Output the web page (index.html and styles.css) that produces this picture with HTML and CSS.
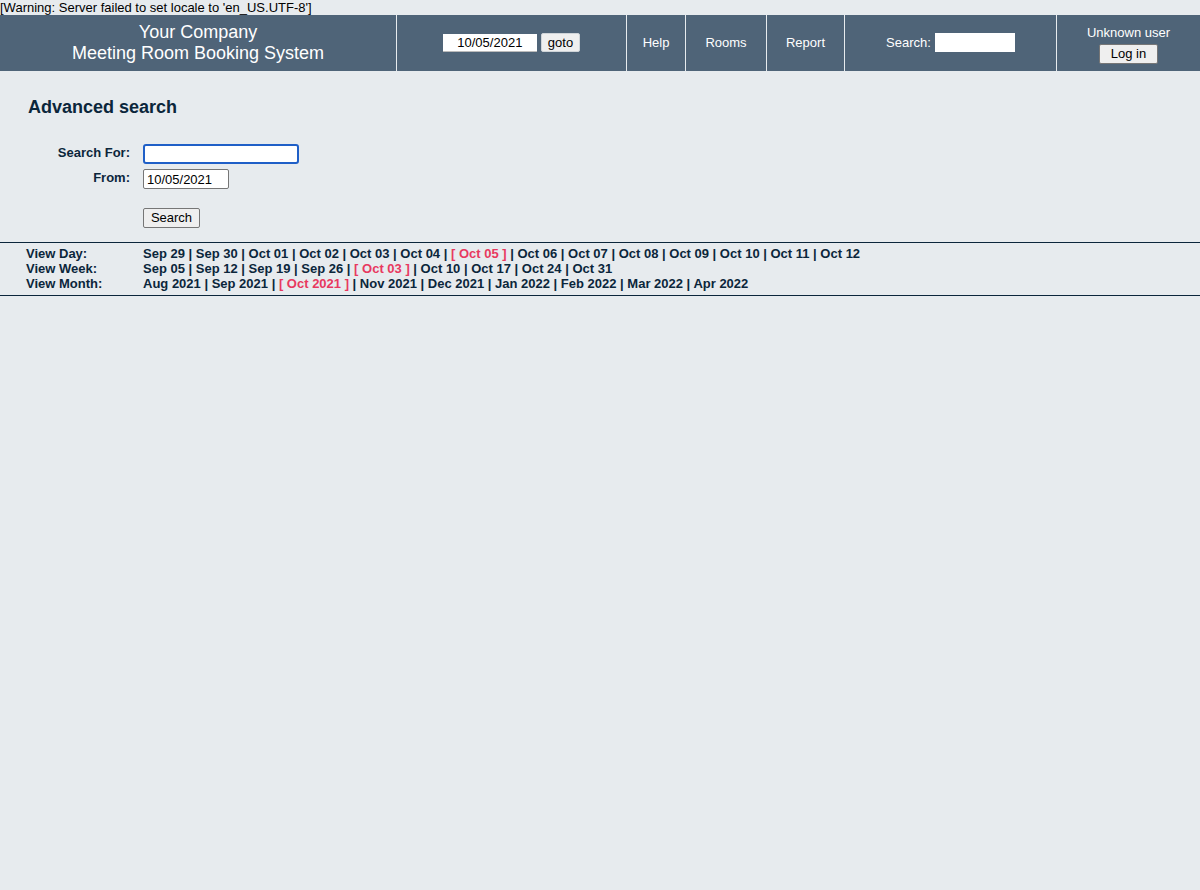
FILE: index.html
```html
<!DOCTYPE html>
<html>
<head>
<meta charset="utf-8">
<title>Advanced search</title>
<link rel="stylesheet" href="styles.css">
</head>
<body>
<div class="warning">[Warning: Server failed to set locale to 'en_US.UTF-8']</div>
<header class="banner">
  <div class="cell company">Your Company<br>Meeting Room Booking System</div>
  <div class="cell dategoto"><input class="datein" type="text" value="10/05/2021"><button class="btn">goto</button></div>
  <div class="cell nav help">Help</div>
  <div class="cell nav rooms">Rooms</div>
  <div class="cell nav report">Report</div>
  <div class="cell searchcell"><span>Search:</span><input class="searchin" type="text"></div>
  <div class="cell usercell"><div>Unknown user</div><button class="btn login">Log in</button></div>
</header>
<main class="content">
  <h2 class="title">Advanced search</h2>
  <form class="sform">
    <label class="lbl">Search For:</label>
    <input class="textin focus" type="text">
    <label class="lbl">From:</label>
    <input class="textin from" type="text" value="10/05/2021">
    <span></span>
    <button class="btn submit" type="button">Search</button>
  </form>
</main>
<nav class="viewnav">
  <div class="vrow"><span class="vlbl">View Day:</span><span class="vlinks">Sep 29 | Sep 30 | Oct 01 | Oct 02 | Oct 03 | Oct 04 | <span class="cur">[ Oct 05 ]</span> | Oct 06 | Oct 07 | Oct 08 | Oct 09 | Oct 10 | Oct 11 | Oct 12</span></div>
  <div class="vrow"><span class="vlbl">View Week:</span><span class="vlinks">Sep 05 | Sep 12 | Sep 19 | Sep 26 | <span class="cur">[ Oct 03 ]</span> | Oct 10 | Oct 17 | Oct 24 | Oct 31</span></div>
  <div class="vrow"><span class="vlbl">View Month:</span><span class="vlinks">Aug 2021 | Sep 2021 | <span class="cur">[ Oct 2021 ]</span> | Nov 2021 | Dec 2021 | Jan 2022 | Feb 2022 | Mar 2022 | Apr 2022</span></div>
</nav>
</body>
</html>
```
FILE: styles.css
```css
html, body {
  margin: 0;
  padding: 0;
  background: #e7ebee;
  font-family: "Liberation Sans", Arial, sans-serif;
  color: #0b263b;
}
.warning {
  font-size: 13px;
  line-height: 15px;
  height: 15px;
  color: #000;
}
.banner {
  display: flex;
  gap: 1px;
  height: 56px;
  color: #fff;
}
.cell {
  background: #4f6478;
  display: flex;
  align-items: center;
  justify-content: center;
  font-size: 13px;
}
.company {
  width: 396px;
  font-size: 18px;
  line-height: 21px;
  text-align: center;
}
.nav { padding-bottom: 2px; box-sizing: border-box; }
.dategoto { width: 229px; gap: 4px; padding-bottom: 1px; box-sizing: border-box; }
.help { width: 58px; }
.rooms { width: 80px; }
.report { width: 77px; }
.searchcell { width: 211px; gap: 4px; padding-bottom: 2px; box-sizing: border-box; }
.usercell { flex: 1; flex-direction: column; gap: 4px; padding-top: 2px; box-sizing: border-box; }
input {
  font-family: "Liberation Sans", Arial, sans-serif;
  font-size: 13px;
  box-sizing: border-box;
  background: #fff;
  color: #000;
}
.datein {
  width: 94px;
  height: 18px;
  border: none;
  border-bottom: 1px solid #bbb;
  text-align: center;
  padding: 0 2px;
}
.searchin {
  width: 80px;
  height: 19px;
  border: none;
  padding: 0 2px;
}
.btn {
  font-family: "Liberation Sans", Arial, sans-serif;
  font-size: 13px;
  background: #efefef;
  border: 1px solid #767676;
  border-radius: 2px;
  color: #000;
  padding: 1px 6px;
  height: 20px;
  line-height: 16px;
  box-sizing: border-box;
}
.dategoto .btn { border-color: #cfd4d8; height: 19px; }
.login { width: 59px; }
.content {
  padding: 0 0 0 28px;
}
.title {
  margin: 0;
  padding-top: 26px;
  font-size: 18px;
  line-height: 20px;
  font-weight: bold;
}
.sform {
  display: grid;
  grid-template-columns: 102px auto;
  justify-content: start;
  column-gap: 13px;
  margin-top: 27px;
  padding-bottom: 14px;
}
.lbl {
  font-size: 13px;
  font-weight: bold;
  text-align: right;
  line-height: 15px;
  padding-top: 1px;
}
.textin {
  height: 20px;
  border: 1px solid #767676;
  border-radius: 2px;
  padding: 1px 3px;
  margin-bottom: 5px;
}
.focus {
  width: 156px;
  outline: none;
  border: 2px solid #1f5fc7;
  border-radius: 3px;
}
.from { width: 86px; margin-bottom: 19px; }
.submit { width: 57px; justify-self: start; }
.viewnav {
  border-top: 1px solid #0b263b;
  border-bottom: 1px solid #0b263b;
  padding: 3px 0 4px 26px;
  font-size: 13px;
  font-weight: bold;
  line-height: 15px;
}
.vrow { display: flex; }
.vlbl { width: 117px; }
.cur { color: #e8395f; }
```
